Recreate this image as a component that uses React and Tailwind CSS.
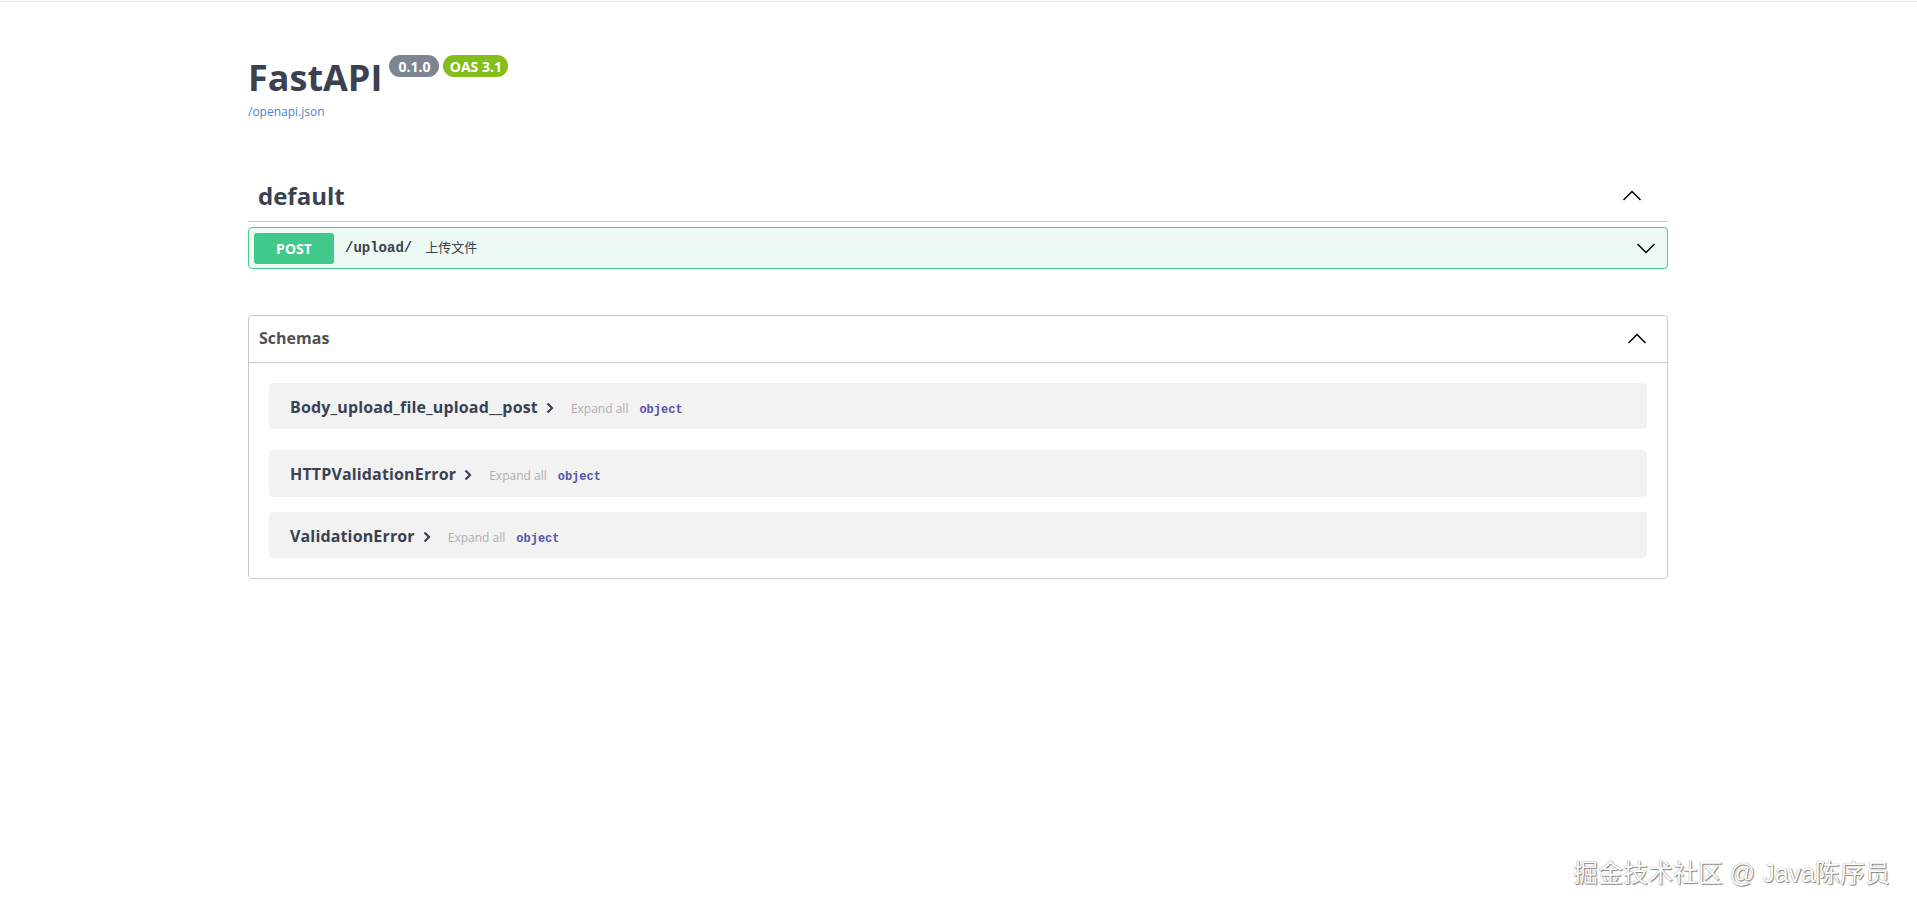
import React from 'react';

const sans = "font-['Open_Sans','Noto_Sans_CJK_SC',sans-serif]";
const mono = "font-['Liberation_Mono','Courier_New',monospace]";

function Arrow({ dir = 'up' }) {
  const pts = dir === 'up' ? '1.5,14 10,5.5 18.5,14' : '1.5,6 10,14.5 18.5,6';
  return (
    <svg viewBox="0 0 20 20" className="w-5 h-5 text-black" fill="none" stroke="currentColor" strokeWidth="1.5">
      <polyline points={pts} />
    </svg>
  );
}

function Caret() {
  return (
    <svg viewBox="0 0 8 12" className="w-2 h-3 ml-[8px] translate-y-[1px] text-[#3b4151]" fill="none" stroke="currentColor" strokeWidth="2.2">
      <polyline points="1.5,1.5 6,6 1.5,10.5" />
    </svg>
  );
}

const models = [
  { name: 'Body_upload_file_upload__post', h: 'h-[46px] mb-[21px]' },
  { name: 'HTTPValidationError', h: 'h-[47px] mb-[15px]' },
  { name: 'ValidationError', h: 'h-[46px]' },
];

export default function App() {
  return (
    <div className={`relative h-[913px] bg-white overflow-hidden ${sans}`}>
      <div className="mt-px h-px bg-[#e4e4e4]" />

      <div className="ml-[248px] w-[1420px]">
        {/* info */}
        <div className="pt-[58px]">
          <div className="flex items-start">
            <span className="text-[36px] leading-[36px] font-bold text-[#3b4151]">FastAPI</span>
            <div className="flex gap-[4px] ml-[7px] -mt-[5px]">
              <span className="w-[50px] h-[22px] flex items-center justify-center rounded-full bg-[#7d8492] text-white text-[14px] font-bold">0.1.0</span>
              <span className="w-[65px] h-[22px] flex items-center justify-center rounded-full bg-[#85bd1a] text-white text-[14px] font-bold">OAS 3.1</span>
            </div>
          </div>
          <a className="block mt-[8px] text-[12px] leading-[16px] text-[#4a84d4]">/openapi.json</a>
        </div>

        {/* default tag */}
        <div className="mt-[50px] pt-[10px] pb-[9px] pl-[10px] pr-[26px] flex items-center justify-between border-b border-[#c6c8cc]">
          <h3 className="text-[24px] leading-[32px] font-bold text-[#3b4151]">default</h3>
          <Arrow dir="up" />
        </div>

        <div className="mt-[5px] h-[42px] flex items-center pl-[5px] pr-[11px] border border-[#49cc90] bg-[#edfaf4] rounded-[4px]">
          <span className="w-[80px] h-[31px] flex items-center justify-center rounded-[3px] bg-[#41c98b] text-white text-[14px] font-bold">POST</span>
          <span className={`ml-[11px] text-[14px] font-bold text-[#3b4151] ${mono}`}>/upload/</span>
          <span className="ml-[13px] text-[13px] text-[#3b4151]">上传文件</span>
          <div className="flex-1" />
          <Arrow dir="down" />
        </div>

        {/* schemas */}
        <div className="mt-[46px] border border-[#c9cacd] rounded-[4px]">
          <div className="h-[47px] flex items-center justify-between pl-[10px] pr-[20px] border-b border-[#c9cacd]">
            <h4 className="-mt-[2px] text-[16px] font-bold text-[#505050]">Schemas</h4>
            <Arrow dir="up" />
          </div>
          <div className="pt-[20px] pb-[20px] px-[20px]">
            {models.map((m) => (
              <div key={m.name} className={`${m.h} flex items-center pl-[21px] rounded-[4px] bg-[#f2f2f2]`}>
                <div className="flex items-baseline mt-[1px]">
                  <span className="text-[16px] font-bold text-[#3b4151] tracking-[0.15px]">{m.name}</span>
                  <Caret />
                  <span className="ml-[17px] text-[12px] text-[#afaeae]">Expand all</span>
                  <span className={`ml-[11px] text-[12px] font-bold text-[#55a] ${mono}`}>object</span>
                </div>
              </div>
            ))}
          </div>
        </div>
      </div>

      <div className="absolute top-[861px] right-[27px] text-[25px] leading-[25px] text-white font-['Liberation_Sans','Noto_Sans_CJK_SC',sans-serif] [text-shadow:0_0_1px_rgba(0,0,0,0.55),1px_1px_1px_rgba(0,0,0,0.45)]">
        掘金技术社区 @ Java陈序员
      </div>
    </div>
  );
}
